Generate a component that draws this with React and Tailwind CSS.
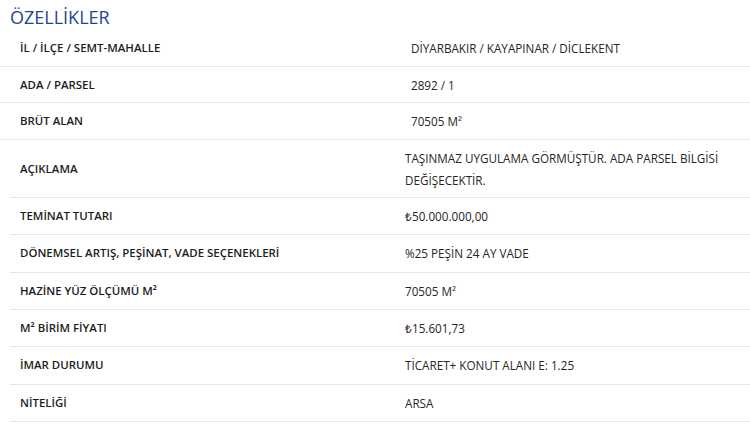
import React from "react";

const firstRows = [
  ["İL / İLÇE / SEMT-MAHALLE", "DİYARBAKIR / KAYAPINAR / DİCLEKENT", "h-[37px]"],
  ["ADA / PARSEL", "2892 / 1", "h-[36px]"],
  ["BRÜT ALAN", "70505 M²", "h-[37px]"],
];

const secondRows = [
  ["AÇIKLAMA", "TAŞINMAZ UYGULAMA GÖRMÜŞTÜR. ADA PARSEL BİLGİSİ DEĞİŞECEKTİR.", "h-[58px]"],
  ["TEMİNAT TUTARI", "₺50.000.000,00", "h-[37.33px]"],
  ["DÖNEMSEL ARTIŞ, PEŞİNAT, VADE SEÇENEKLERİ", "%25 PEŞİN 24 AY VADE", "h-[37.33px]"],
  ["HAZİNE YÜZ ÖLÇÜMÜ M²", "70505 M²", "h-[37.33px]"],
  ["M² BİRİM FİYATI", "₺15.601,73", "h-[37.33px]"],
  ["İMAR DURUMU", "TİCARET+ KONUT ALANI E: 1.25", "h-[37.33px]"],
  ["NİTELİĞİ", "ARSA", "h-[37.33px]"],
];

function Row({ label, value, height, labelPad, cols }) {
  return (
    <div className={`grid ${cols} ${height} border-b border-[#e6e6e6]`}>
      <div className={`${labelPad} flex items-center text-[11.45px] font-semibold text-[#1c1c1c]`}>
        {label}
      </div>
      <div className="pl-[10px] pr-4 flex items-center text-[#262626]">
        {value}
      </div>
    </div>
  );
}

export default function App() {
  return (
    <div
      className="w-[750px] h-[436px] bg-white overflow-hidden text-[11.7px] leading-[22px]"
      style={{ fontFamily: '"Open Sans", "Liberation Sans", sans-serif' }}
    >
      <div className="h-[30px] pl-[10px] pt-[5px] text-[18px] leading-[24px] text-[#22468f]">
        ÖZELLİKLER
      </div>
      <div>
        {firstRows.map(([l, v, h]) => (
          <Row key={l} label={l} value={v} height={h} labelPad="pl-[20px]" cols="grid-cols-[401px_1fr]" />
        ))}
      </div>
      <div className="ml-[10px]">
        {secondRows.map(([l, v, h]) => (
          <Row key={l} label={l} value={v} height={h} labelPad="pl-[10px]" cols="grid-cols-[385px_1fr]" />
        ))}
      </div>
    </div>
  );
}
